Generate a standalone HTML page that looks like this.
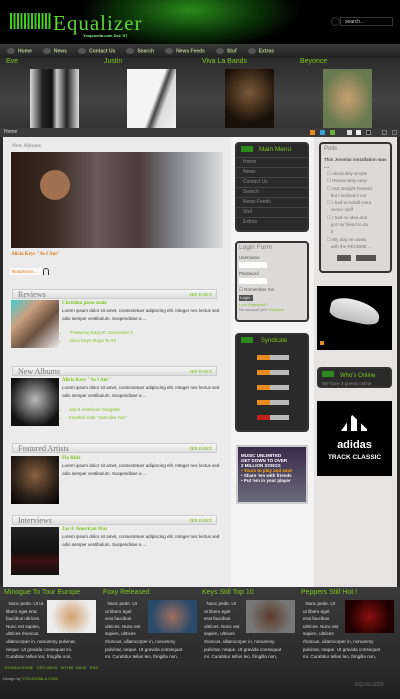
<!DOCTYPE html>
<html><head><meta charset="utf-8"><style>
*{margin:0;padding:0;box-sizing:border-box}
body{width:400px;height:699px;overflow:hidden;background:#2a2a2a;font-family:"Liberation Sans",sans-serif;font-size:5px;color:#333;position:relative}
.a{position:absolute}
.ser{font-family:"Liberation Serif",serif}
.g{color:#7fc31c}
.nav span{display:inline-block;margin-right:11px;color:#b8c890;font-weight:bold;font-size:5px}
.nav i{display:inline-block;width:8px;height:6px;border-radius:50%;background:#555;margin-right:3px;vertical-align:middle}
.mm div{height:10px;border-top:1px solid #444;color:#888;padding-left:6px;line-height:9px;font-size:5px}
.sb{border:2px solid #333;border-radius:4px}
.hdr{height:10px;background:linear-gradient(#f5f5f5,#ddd);border:1px solid #ccc;font-size:8px;color:#777;padding-left:5px;line-height:9px}
.hdr b{float:right;color:#7fc31c;font-size:4px;margin-right:4px;font-weight:bold}
p.t{font-size:4.5px;color:#333;line-height:8px}
li{font-size:4.5px;color:#7fc31c;margin-left:13px;line-height:7.5px}
.fc{color:#ddd;font-size:4.6px;line-height:7.6px}
</style></head><body>
<div class="a" style="left:0;top:0;width:400px;height:44px;background:radial-gradient(ellipse 110px 40px at 190px 10px,#2a8a1a,#0d3a0a 55%,#000 100%)"></div>
<div class="a" style="left:10px;top:13px;width:42px;height:16px;background:repeating-linear-gradient(90deg,#3fcf1f 0 2px,#000 2px 3.5px)"></div>
<div class="a ser" style="left:53px;top:11px;font-size:21px;color:#5ed635;letter-spacing:1px">Equalizer</div>
<div class="a" style="left:83px;top:33px;font-size:4px;color:#8f8;font-weight:bold">Yoojoomla.com Dec '07</div>
<div class="a" style="left:331px;top:17px;width:9px;height:9px;border:1px solid #333;border-radius:50%"></div>
<div class="a" style="left:340px;top:17px;width:53px;height:9px;background:#000;border:1px solid #333;color:#ccc;font-size:5px;padding-left:4px;line-height:8px">search...</div>
<div class="a nav" style="left:0;top:44px;width:400px;height:14px;background:linear-gradient(#3a3a3a,#222);padding:4px 0 0 7px;white-space:nowrap"><span><i></i>Home</span><span><i></i>News</span><span><i></i>Contact Us</span><span><i></i>Search</span><span><i></i>News Feeds</span><span><i></i>Stuf</span><span><i></i>Extras</span></div>
<div class="a" style="left:0;top:58px;width:400px;height:70px;background:linear-gradient(#2b2b2b,#444 60%,#333)"></div>
<div class="a g" style="left:6px;top:58px;font-size:7px">Eve</div>
<div class="a g" style="left:104px;top:58px;font-size:7px">Justin</div>
<div class="a g" style="left:202px;top:58px;font-size:7px">Viva La Bands</div>
<div class="a g" style="left:300px;top:58px;font-size:7px">Beyonce</div>
<div class="a" style="left:30px;top:69px;width:49px;height:59px;background:linear-gradient(90deg,#ddd,#222 25%,#111 45%,#ccc 55%,#222 75%,#ddd)"></div>
<div class="a" style="left:127px;top:69px;width:49px;height:59px;background:linear-gradient(110deg,#f4f4f4 55%,#444 62%,#ddd 72%,#f0f0f0)"></div>
<div class="a" style="left:225px;top:69px;width:49px;height:59px;background:radial-gradient(circle at 50% 40%,#7a5a3a,#1a1008 70%)"></div>
<div class="a" style="left:323px;top:69px;width:49px;height:59px;background:radial-gradient(ellipse at 50% 50%,#c8a070,#6a7a50 70%)"></div>
<div class="a" style="left:0;top:128px;width:400px;height:9px;background:#3a3a3a;color:#ddd;font-size:5px;padding:1px 4px">Home</div>
<div class="a" style="left:310px;top:130px;width:5px;height:5px;background:#e88a20"></div>
<div class="a" style="left:320px;top:130px;width:5px;height:5px;background:#3aa0d8"></div>
<div class="a" style="left:330px;top:130px;width:5px;height:5px;background:#6ab03a"></div>
<div class="a" style="left:347px;top:130px;width:5px;height:5px;background:#ddd"></div>
<div class="a" style="left:356px;top:130px;width:5px;height:5px;background:#eee"></div>
<div class="a" style="left:366px;top:130px;width:5px;height:5px;background:#222;border:1px solid #888"></div>
<div class="a" style="left:382px;top:130px;width:5px;height:5px;border:1px solid #777"></div>
<div class="a" style="left:392px;top:130px;width:5px;height:5px;border:1px solid #777"></div>
<div class="a" style="left:3px;top:137px;width:394px;height:450px;background:#ebebeb"></div>
<div class="a" style="left:231px;top:137px;width:83px;height:450px;background:#f3f3f3"></div>
<div class="a" style="left:314px;top:137px;width:83px;height:450px;background:#e6e4e2"></div>
<div class="a ser" style="left:12px;top:143px;font-size:5.5px;color:#777">New Albums</div>
<div class="a" style="left:11px;top:152px;width:212px;height:96px;background:linear-gradient(90deg,#2a1a12 0,#3a2a22 20%,#6a5a58 40%,#4a3a38 60%,#8a909a 80%,#ddd 100%)"></div>
<div class="a" style="left:40px;top:170px;width:30px;height:30px;border-radius:50%;background:#a07050"></div>
<div class="a ser" style="left:11px;top:252px;font-size:5px;color:#e07a1a;font-weight:bold">Alicia Keys "As I Am"</div>
<div class="a" style="left:10px;top:268px;width:32px;height:7px;background:#f8f8f8;color:#e07a1a;font-size:4.5px;padding-left:2px;line-height:7px">Readmore...</div>
<div class="a" style="left:43px;top:268px;width:6px;height:7px;border:1.5px solid #333;border-radius:3px 3px 0 0;border-bottom:none"></div>
<div class="a hdr ser" style="left:12px;top:289px;width:205px">Reviews<b>JUN 15 OCT</b></div>
<div class="a" style="left:11px;top:300px;width:48px;height:48px;background:linear-gradient(135deg,#4cc 0,#caa080 30%,#6a5040 60%,#eee)"></div>
<div class="a ser g" style="left:62px;top:301px;font-size:5px;font-weight:bold">Christina poses nude</div>
<div class="a" style="left:62px;top:307px;width:158px"><p class="t">Lorem ipsum dolor sit amet, consectetuer adipiscing elit. Integer nec lectus sed odio semper vestibulum. Suspendisse a ...</p></div>
<div class="a" style="left:56px;top:329px"><ul><li>"Featuring Eazy-E" December 4</li><li>Alicia Keys Stops To #3</li></ul></div>
<div class="a hdr ser" style="left:12px;top:366px;width:205px">New Albums<b>JUN 15 OCT</b></div>
<div class="a" style="left:11px;top:378px;width:48px;height:48px;background:radial-gradient(circle at 50% 45%,#bbb,#555 45%,#111 75%)"></div>
<div class="a ser g" style="left:62px;top:378px;font-size:5px;font-weight:bold">Alicia Keys "As I Am"</div>
<div class="a" style="left:62px;top:384px;width:158px"><p class="t">Lorem ipsum dolor sit amet, consectetuer adipiscing elit. Integer nec lectus sed odio semper vestibulum. Suspendisse a ...</p></div>
<div class="a" style="left:56px;top:406px"><ul><li>Jay-Z American Gangster</li><li>Keyshia Cole "Just Like You"</li></ul></div>
<div class="a hdr ser" style="left:12px;top:443px;width:205px">Featured Artists<b>JUN 15 OCT</b></div>
<div class="a" style="left:11px;top:456px;width:48px;height:48px;background:radial-gradient(circle at 50% 40%,#8a6040,#2a2018 60%,#000)"></div>
<div class="a ser g" style="left:62px;top:456px;font-size:5px;font-weight:bold">Flo Rida</div>
<div class="a" style="left:62px;top:462px;width:158px"><p class="t">Lorem ipsum dolor sit amet, consectetuer adipiscing elit. Integer nec lectus sed odio semper vestibulum. Suspendisse a ...</p></div>
<div class="a hdr ser" style="left:12px;top:515px;width:205px">Interviews<b>JUN 15 OCT</b></div>
<div class="a" style="left:11px;top:527px;width:48px;height:48px;background:linear-gradient(#222,#111 50%,#3a1010 70%,#111)"></div>
<div class="a ser g" style="left:62px;top:527px;font-size:5px;font-weight:bold">Jay-Z American Way</div>
<div class="a" style="left:62px;top:533px;width:158px"><p class="t">Lorem ipsum dolor sit amet, consectetuer adipiscing elit. Integer nec lectus sed odio semper vestibulum. Suspendisse a ...</p></div>
<div class="a sb mm" style="left:235px;top:142px;width:74px;height:90px;background:#2a2a2a">
<div style="border:none;height:13px;line-height:12px;color:#7fc31c;font-size:6.5px;padding-left:4px"><span style="display:inline-block;width:12px;height:6px;background:#2c8a1c;margin-right:6px;vertical-align:middle"></span>Main Menu</div>
<div>Home</div><div>News</div><div>Contact Us</div><div>Search</div><div>News Feeds</div><div>Stuf</div><div>Extras</div></div>
<div class="a sb" style="left:235px;top:241px;width:74px;height:81px;background:#dcdad8;padding:1px 2px">
<div style="font-size:6.5px;color:#777">Login Form</div>
<div style="font-size:4.5px;color:#555;margin-top:4px">Username</div>
<div style="width:28px;height:6px;background:#fff;margin-top:2px"></div>
<div style="font-size:4.5px;color:#555;margin-top:3px">Password</div>
<div style="width:28px;height:6px;background:#fff;margin-top:2px"></div>
<div style="font-size:4.5px;color:#555;margin-top:3px">☐ Remember me</div>
<div style="width:14px;height:6px;background:#555;color:#eee;font-size:4px;margin-top:2px;padding-left:1px">Login</div>
<div style="font-size:4px;color:#7fc31c;margin-top:1px">Lost Password?</div>
<div style="font-size:4px;color:#777">No account yet? <span class="g">Register</span></div></div>
<div class="a sb" style="left:235px;top:333px;width:74px;height:99px;background:#2a2a2a">
<div style="height:12px;line-height:12px;color:#7fc31c;font-size:6px;padding-left:4px"><span style="display:inline-block;width:12px;height:6px;background:#2c8a1c;margin-right:8px;vertical-align:middle"></span>Syndicate</div>
<div style="margin:8px 0 0 20px;width:32px;height:5px;background:linear-gradient(90deg,#e88a20 40%,#bbb 40%)"></div>
<div style="margin:10px 0 0 20px;width:32px;height:5px;background:linear-gradient(90deg,#e88a20 40%,#bbb 40%)"></div>
<div style="margin:10px 0 0 20px;width:32px;height:5px;background:linear-gradient(90deg,#e88a20 40%,#bbb 40%)"></div>
<div style="margin:10px 0 0 20px;width:32px;height:5px;background:linear-gradient(90deg,#e88a20 40%,#bbb 40%)"></div>
<div style="margin:10px 0 0 20px;width:32px;height:5px;background:linear-gradient(90deg,#c02020 40%,#bbb 40%)"></div></div>
<div class="a" style="left:236px;top:445px;width:72px;height:59px;background:linear-gradient(#3a2a4a,#6a6a7a);border:2px solid #ccc;color:#fff;font-size:4.5px;padding:6px 3px;line-height:5px;font-weight:bold">MUSIC UNLIMITED<br>GET DOWN TO OVER<br>2 MILLION SONGS<br><span style="color:#fa0">• Yours to play and save</span><br>• Share 'em with friends<br>• Put 'em in your player</div>
<div class="a sb" style="left:319px;top:142px;width:73px;height:131px;background:#dcdad8;padding:2px 3px;color:#777">
<div style="font-size:6px">Polls</div>
<div style="font-size:4.5px;font-weight:bold;color:#555;margin-top:4px;line-height:7px">This Joomla! installation was ....</div>
<div style="font-size:4.5px;line-height:7.3px;padding-left:3px">☐ Absolutely simple<br>☐ Reasonably easy<br>☐ Not straight-forward<br>&nbsp;&nbsp;&nbsp;but I worked it out<br>☐ I had to install extra<br>&nbsp;&nbsp;&nbsp;server stuff<br>☐ I had no idea and<br>&nbsp;&nbsp;&nbsp;got my friend to do<br>&nbsp;&nbsp;&nbsp;it<br>☐ My dog ran away<br>&nbsp;&nbsp;&nbsp;with the README ...</div>
<div style="margin:5px 0 0 13px"><span style="display:inline-block;width:14px;height:6px;background:#555"></span> <span style="display:inline-block;width:20px;height:6px;background:#555;margin-left:4px"></span></div></div>
<div class="a" style="left:317px;top:286px;width:75px;height:64px;background:#000"></div>
<div class="a" style="left:330px;top:300px;width:50px;height:22px;border-radius:40% 60% 30% 30%;background:linear-gradient(#eee,#bbb);transform:rotate(12deg)"></div>
<div class="a" style="left:320px;top:341px;width:4px;height:4px;background:#e88a20"></div>
<div class="a sb" style="left:317px;top:367px;width:75px;height:21px;background:#2a2a2a;color:#7fc31c;font-size:6px;padding:2px 3px">
<span style="display:inline-block;width:12px;height:6px;background:#2c8a1c;margin-right:6px"></span>Who's Online<div style="font-size:4.5px;color:#888;margin-top:2px">We have 3 guests online</div></div>
<div class="a" style="left:317px;top:401px;width:75px;height:75px;background:#000;color:#fff;text-align:center;padding-top:38px">
<div style="position:absolute;left:24px;top:14px;width:28px;height:16px;background:repeating-linear-gradient(90deg,#fff 0 6px,#000 6px 10px);clip-path:polygon(0 100%,40% 0,100% 100%)"></div>
<div style="font-size:11px;font-weight:bold">adidas</div><div style="font-size:6.5px;font-weight:bold;margin-top:3px">TRACK CLASSIC</div></div>
<div class="a" style="left:0;top:587px;width:400px;height:72px;background:linear-gradient(#3a3a3a,#2c2c2c)"></div>
<div class="a g" style="left:4px;top:589px;font-size:7px">Minogue To Tour Europe</div>
<div class="a g" style="left:103px;top:589px;font-size:7px">Foxy Released</div>
<div class="a g" style="left:202px;top:589px;font-size:7px">Keys Still Top 10</div>
<div class="a g" style="left:301px;top:589px;font-size:7px">Peppers Still Hot !</div>
<div class="a" style="left:47px;top:600px;width:49px;height:33px;background:radial-gradient(circle,#d0a070,#eee 70%)"></div>
<div class="a" style="left:148px;top:600px;width:49px;height:33px;background:radial-gradient(circle,#a07060,#2a4a6a 70%)"></div>
<div class="a" style="left:246px;top:600px;width:49px;height:33px;background:radial-gradient(circle,#5a3a2a,#777 70%)"></div>
<div class="a" style="left:345px;top:600px;width:49px;height:33px;background:radial-gradient(circle,#8a1010,#200 70%)"></div>
<div class="a fc" style="left:6px;top:600px;width:90px">&nbsp;&nbsp;Nunc pede. Ut ut<br>libero eget erat<br>faucibus ultrices.<br>Nunc est sapien,<br>ultrices rhoncus,<br>ullamcorper in, nonummy pulvinar,<br>neque. Ut gravida consequat mi.<br>Curabitur tellus leo, fringilla non,</div>
<div class="a fc" style="left:105px;top:600px;width:92px">&nbsp;&nbsp;Nunc pede. Ut<br>ut libero eget<br>erat faucibus<br>ultrices. Nunc est<br>sapien, ultrices<br>rhoncus, ullamcorper in, nonummy<br>pulvinar, neque. Ut gravida consequat<br>mi. Curabitur tellus leo, fringilla non,</div>
<div class="a fc" style="left:204px;top:600px;width:92px">&nbsp;&nbsp;Nunc pede. Ut<br>ut libero eget<br>erat faucibus<br>ultrices. Nunc est<br>sapien, ultrices<br>rhoncus, ullamcorper in, nonummy<br>pulvinar, neque. Ut gravida consequat<br>mi. Curabitur tellus leo, fringilla non,</div>
<div class="a fc" style="left:303px;top:600px;width:92px">&nbsp;&nbsp;Nunc pede. Ut<br>ut libero eget<br>erat faucibus<br>ultrices. Nunc est<br>sapien, ultrices<br>rhoncus, ullamcorper in, nonummy<br>pulvinar, neque. Ut gravida consequat<br>mi. Curabitur tellus leo, fringilla non,</div>
<div class="a" style="left:0;top:660px;width:400px;height:39px;background:linear-gradient(#2e2e2e,#1e1e1e)"></div>
<div class="a g" style="left:4px;top:665px;font-size:4px">JOOMLA HOME &nbsp; CSS VALID &nbsp; XHTML VALID &nbsp; RSS</div>
<div class="a" style="left:3px;top:676px;font-size:4px;color:#aaa">Design by <span class="g">YOOJOOMLA.COM</span></div>
<div class="a" style="left:355px;top:682px;font-size:5px;color:#555;font-weight:bold">EQUALIZER</div>
</body></html>
